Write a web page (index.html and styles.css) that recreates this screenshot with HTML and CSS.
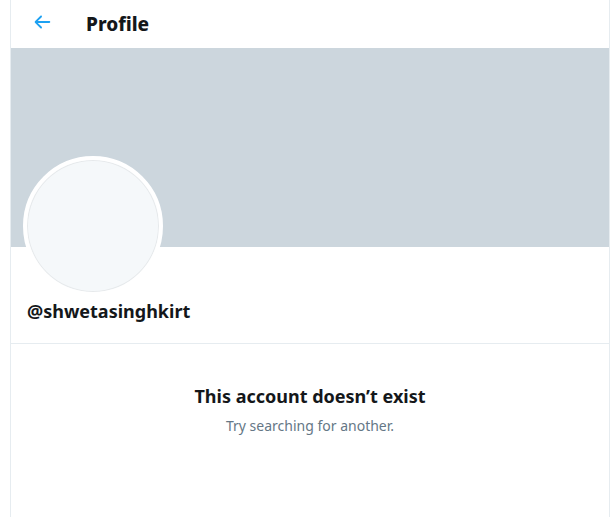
FILE: index.html
```html
<!DOCTYPE html>
<html lang="en">
<head>
<meta charset="utf-8">
<title>Profile</title>
<link rel="stylesheet" href="styles.css">
</head>
<body>
<main class="column">
  <header class="topbar">
    <button class="back" aria-label="Back">
      <svg viewBox="0 0 24 24" width="22" height="22"><path d="M20 11H7.414l4.293-4.293c.39-.39.39-1.023 0-1.414s-1.023-.39-1.414 0l-6 6c-.39.39-.39 1.023 0 1.414l6 6c.195.195.45.293.707.293s.512-.098.707-.293c.39-.39.39-1.023 0-1.414L7.414 13H20c.553 0 1-.447 1-1s-.447-1-1-1z"/></svg>
    </button>
    <h1 class="title">Profile</h1>
  </header>
  <div class="banner"></div>
  <section class="info">
    <div class="avatar"></div>
    <div class="handle">@shwetasinghkirt</div>
  </section>
  <section class="empty">
    <div class="empty-title">This account doesn’t exist</div>
    <div class="empty-sub">Try searching for another.</div>
  </section>
</main>
</body>
</html>
```

FILE: styles.css
```css
html, body {
  margin: 0;
  padding: 0;
  background: #fff;
}
body {
  font-family: "Noto Sans", "Open Sans", sans-serif;
  color: #14171a;
}
.column {
  margin-left: 10px;
  width: 598px;
  min-height: 560px;
  border-left: 1px solid #e6ecf0;
  border-right: 1px solid #e6ecf0;
}
.topbar {
  height: 48px;
  display: flex;
  align-items: center;
  padding-left: 11px;
  box-sizing: border-box;
}
.back {
  width: 39px;
  height: 39px;
  border: 0;
  background: transparent;
  padding: 0;
  display: flex;
  align-items: center;
  justify-content: center;
  fill: #1da1f2;
  margin-top: -4px;
}
.title {
  margin: 0 0 0 25px;
  font-size: 19px;
  font-weight: 800;
  line-height: 24px;
}
.banner {
  height: 199px;
  background: #ccd6dd;
}
.info {
  display: flow-root;
  padding: 0 12px 19px;
  border-bottom: 1px solid #e6ecf0;
}
.avatar {
  width: 132px;
  height: 132px;
  border: 4px solid #fff;
  border-radius: 50%;
  background: #f5f8fa;
  box-shadow: inset 0 0 0 1px rgba(0,0,0,0.06);
  margin-top: -91px;
}
.handle {
  margin-top: 3px;
  margin-left: 4px;
  font-size: 18px;
  font-weight: 700;
  line-height: 25px;
}
.empty {
  text-align: center;
  padding-top: 39px;
}
.empty-title {
  font-size: 18px;
  font-weight: 700;
  line-height: 26px;
}
.empty-sub {
  margin-top: 7px;
  font-size: 14px;
  color: #657786;
  line-height: 20px;
}
```
